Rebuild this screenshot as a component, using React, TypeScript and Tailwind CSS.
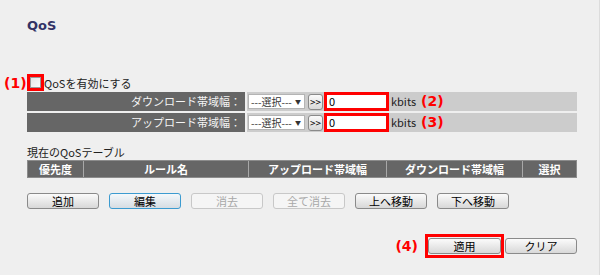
import React from "react";

const jp = { fontFamily: '"Noto Sans CJK JP", "Noto Sans", sans-serif' };
const note = { fontFamily: '"DejaVu Sans", "Noto Sans CJK JP", sans-serif' };

function Btn({ label, kind = "normal", w = "w-[72px]" }: { label: string; kind?: "normal" | "focus" | "disabled"; w?: string }) {
    const cls =
        kind === "disabled"
            ? "border-[#c8c8c8] bg-[#f5f5f5] text-[#a8a8a8]"
            : kind === "focus"
            ? "border-[#3c9bd0] bg-gradient-to-b from-[#f4f8fb] to-[#d6dde3] text-black"
            : "border-[#8a8a8a] bg-gradient-to-b from-[#fbfbfb] to-[#d8d8d8] text-black";
    return (
        <div className={`${w} h-[16px] rounded-[3px] border flex items-center justify-center text-[11px] leading-none ${cls}`}>
            {label}
        </div>
    );
}

function BandRow({ label, mark }: { label: string; mark: string }) {
    return (
        <div className="flex h-[19px] gap-[2px]">
            <div className="w-[218px] bg-[#666666] text-[#f4f4f4] text-[11px] flex items-center justify-end pr-[4px]">{label}</div>
            <div className="flex-1 bg-[#cccccc] flex items-center">
                <div className="ml-[1px] w-[57px] h-[15px] bg-white border border-[#b4b4b4] flex items-center justify-between pl-[2px] pr-[3px] text-[10px] text-[#333]">
                    <span>---選択---</span>
                    <span className="text-[6px]">▼</span>
                </div>
                <div className="ml-[3px] w-[15px] h-[16px] rounded-[3px] border border-[#8a8a8a] bg-gradient-to-b from-[#fbfbfb] to-[#d8d8d8] flex items-center justify-center text-[10px] text-black">
                    &gt;&gt;
                </div>
                <div className="ml-[1px] w-[65px] h-[19px] border-[3px] border-[#ff0000] bg-white flex items-center pl-[2px] text-[11px] text-black">0</div>
                <span className="ml-[2px] text-[11px] text-[#222]">kbits</span>
                <span className="ml-[5px] text-[14px] font-bold text-[#ff0000]" style={note}>{mark}</span>
            </div>
        </div>
    );
}

export default function App() {
    const cols = [
        { t: "優先度", w: "w-[55px]" },
        { t: "ルール名", w: "w-[165px]" },
        { t: "アップロード帯域幅", w: "w-[138px]" },
        { t: "ダウンロード帯域幅", w: "w-[136px]" },
        { t: "選択", w: "flex-1" },
    ];

    return (
        <div className="w-[600px] h-[275px] bg-[#efefef] border-r border-[#dcdcdc] overflow-hidden" style={jp}>
            <div className="pl-[27px] w-[577px]">
                <div className="mt-[18px] h-[16px] leading-[16px] text-[13px] font-bold text-[#333366]" style={{ fontFamily: '"DejaVu Sans", sans-serif' }}>
                    QoS
                </div>

                <div className="mt-[40px] h-[17px] flex items-center relative">
                    <span className="absolute left-[-23px] top-[2px] text-[14px] font-bold text-[#ff0000] leading-none" style={note}>(1)</span>
                    <div className="w-[17px] h-[17px] border-[3px] border-[#ff0000] flex items-center justify-center">
                        <div className="w-[11px] h-[11px] border border-[#9a9a9a] bg-gradient-to-br from-[#e6e6e6] to-[#fafafa]" />
                    </div>
                    <span className="text-[11px] text-[#222] mt-[2px]">QoSを有効にする</span>
                </div>

                <div className="mt-[1px] flex flex-col gap-[2px]">
                    <BandRow label="ダウンロード帯域幅：" mark="(2)" />
                    <BandRow label="アップロード帯域幅：" mark="(3)" />
                </div>

                <div className="mt-[14px] h-[12px] leading-[12px] text-[11px] text-[#222]">現在のQoSテーブル</div>

                <div className="mt-[2px] h-[18px] flex bg-[#666666] border border-[#8c8c8c]">
                    {cols.map((c, i) => (
                        <div key={c.t} className={`${c.w} flex items-center justify-center text-white text-[11px] font-bold ${i > 0 ? "border-l border-[#a8a8a8]" : ""}`}>
                            {c.t}
                        </div>
                    ))}
                </div>

                <div className="mt-[15px] flex gap-[10px]">
                    <Btn label="追加" />
                    <Btn label="編集" kind="focus" />
                    <Btn label="消去" kind="disabled" />
                    <Btn label="全て消去" kind="disabled" />
                    <Btn label="上へ移動" />
                    <Btn label="下へ移動" />
                </div>

                <div className="mt-[25px] flex items-center justify-end">
                    <span className="mr-[7px] text-[14px] font-bold text-[#ff0000]" style={note}>(4)</span>
                    <div className="w-[79px] h-[24px] border-[3px] border-[#ff0000] flex items-center justify-center">
                        <Btn label="適用" w="w-[73px]" />
                    </div>
                    <div className="ml-[1px]">
                        <Btn label="クリア" w="w-[72px]" />
                    </div>
                </div>
            </div>
        </div>
    );
}
